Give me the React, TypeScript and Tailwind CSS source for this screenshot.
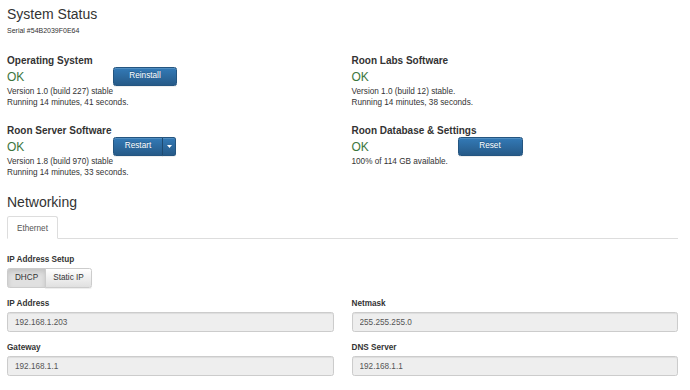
import React from "react";

type Status = {
  title: string;
  lines: string[];
  action?: "reinstall" | "restart" | "reset";
};

const leftStatus: Status[] = [
  { title: "Operating System", lines: ["Version 1.0 (build 227) stable", "Running 14 minutes, 41 seconds."], action: "reinstall" },
  { title: "Roon Server Software", lines: ["Version 1.8 (build 970) stable", "Running 14 minutes, 33 seconds."], action: "restart" },
];

const rightStatus: Status[] = [
  { title: "Roon Labs Software", lines: ["Version 1.0 (build 12) stable.", "Running 14 minutes, 38 seconds."] },
  { title: "Roon Database & Settings", lines: ["100% of 114 GB available."], action: "reset" },
];

const primaryBtn =
  "h-[19px] border border-[#245580] bg-linear-to-b from-[#337ab7] to-[#265a88] text-white text-[8.2px] leading-none [text-shadow:0_-1px_0_rgba(0,0,0,0.2)] shadow-[inset_0_1px_0_rgba(255,255,255,0.15),0_1px_1px_rgba(0,0,0,0.075)]";

function Action({ action }: { action?: Status["action"] }) {
  if (action === "restart") {
    return (
      <div className="flex">
        <button className={`${primaryBtn} w-[50px] rounded-l-[2.5px]`}>Restart</button>
        <button className={`${primaryBtn} w-[14px] -ml-px rounded-r-[2.5px] flex items-center justify-center border-l-[#1f4a70]`}>
          <svg width="5" height="3" viewBox="0 0 5 3">
            <path d="M0 0 H5 L2.5 3 Z" fill="white" />
          </svg>
        </button>
      </div>
    );
  }
  if (action === "reinstall") return <button className={`${primaryBtn} w-[64px] rounded-[2.5px]`}>Reinstall</button>;
  if (action === "reset") return <button className={`${primaryBtn} w-[65px] rounded-[2.5px]`}>Reset</button>;
  return null;
}

function StatusBlock({ s }: { s: Status }) {
  return (
    <div>
      <h4 className="text-[10px] leading-[13px] font-bold">{s.title}</h4>
      <div className="flex items-center h-[19px]">
        <span className="w-[106px] text-[12px] leading-[14px] text-[#3c763d]">OK</span>
        <Action action={s.action} />
      </div>
      {s.lines.map((l) => (
        <p key={l} className="text-[8.2px] leading-[11px]">
          {l}
        </p>
      ))}
    </div>
  );
}

function Field({ label, value }: { label: string; value: string }) {
  return (
    <div>
      <label className="block text-[8.2px] leading-[11px] font-bold mb-[3px]">{label}</label>
      <input
        readOnly
        value={value}
        className="block w-full h-[20px] rounded-[2.5px] border border-[#ccc] bg-[#eee] px-[7px] text-[8.2px] text-[#555] shadow-[inset_0_1px_1px_rgba(0,0,0,0.075)] outline-none"
      />
    </div>
  );
}

export default function App() {
  return (
    <div className="w-[690px] h-[390px] overflow-hidden bg-white pl-[7px] pr-[12px] pt-[5.5px] font-['Liberation_Sans',Arial,sans-serif] text-[#333]">
      <h1 className="text-[14px] leading-[16px]">System Status</h1>
      <p className="mt-[4.5px] text-[7px] leading-[9px]">Serial #54B2039F0E64</p>

      <div className="mt-[19px] grid grid-cols-2 gap-x-[18px]">
        <div className="flex flex-col gap-[16px]">
          {leftStatus.map((s) => (
            <StatusBlock key={s.title} s={s} />
          ))}
        </div>
        <div className="flex flex-col gap-[16px]">
          {rightStatus.map((s) => (
            <StatusBlock key={s.title} s={s} />
          ))}
        </div>
      </div>

      <h2 className="mt-[16px] text-[14px] leading-[16px]">Networking</h2>

      {/* tabs */}
      <ul className="mt-[6px] flex border-b border-[#ddd]">
        <li className="-mb-px border border-[#ddd] border-b-transparent rounded-t-[2.5px] bg-white px-[9px] pt-[6px] pb-[4px] text-[8.2px] leading-[11px] text-[#555]">
          Ethernet
        </li>
      </ul>

      <div className="mt-[15px]">
        <label className="block text-[8.2px] leading-[11px] font-bold mb-[3px]">IP Address Setup</label>
        <div className="flex text-[8.2px] text-[#333]">
          <button className="h-[20px] w-[39px] rounded-l-[2.5px] border border-[#ccc] bg-[#e0e0e0] shadow-[inset_0_3px_5px_rgba(0,0,0,0.125)]">
            DHCP
          </button>
          <button className="-ml-px h-[20px] w-[47px] rounded-r-[2.5px] border border-[#ccc] bg-linear-to-b from-white to-[#e0e0e0] shadow-[inset_0_1px_0_rgba(255,255,255,0.15),0_1px_1px_rgba(0,0,0,0.075)]">
            Static IP
          </button>
        </div>
      </div>

      <div className="mt-[10px] grid grid-cols-2 gap-x-[18px] gap-y-[10px]">
        <Field label="IP Address" value="192.168.1.203" />
        <Field label="Netmask" value="255.255.255.0" />
        <Field label="Gateway" value="192.168.1.1" />
        <Field label="DNS Server" value="192.168.1.1" />
      </div>
    </div>
  );
}
